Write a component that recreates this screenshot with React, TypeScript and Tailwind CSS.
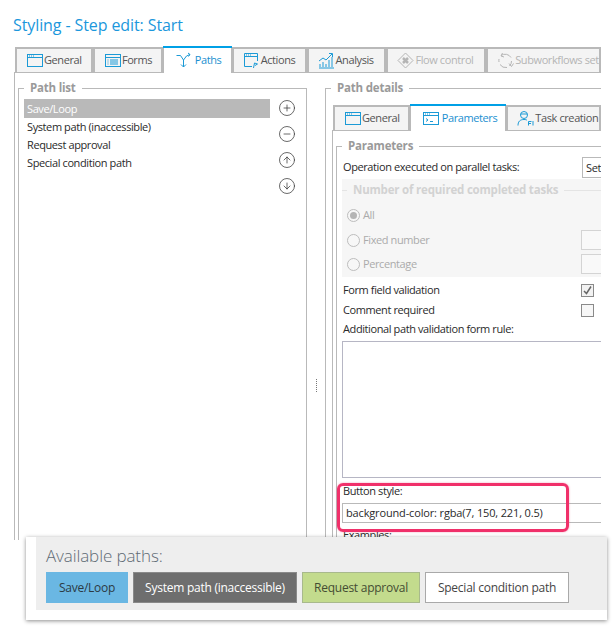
import { CircleArrowDown, CircleArrowUp, CircleMinus, CirclePlus } from "lucide-react";
import type { ReactNode } from "react";

const BLUE = "#1b9ad6";

function Ico({ children, color = BLUE, w = 17 }: { children: ReactNode; color?: string; w?: number }) {
  return (
    <svg width={w} height="17" viewBox="0 0 17 17" fill="none" stroke={color} strokeWidth="1" className="shrink-0">
      {children}
    </svg>
  );
}

const WindowIcon = () => (
  <Ico>
    <rect x="1.5" y="2.5" width="15" height="12" />
    <path d="M1.5 5.5h15" />
    <path d="M3 4h1M5 4h1M7 4h1" />
  </Ico>
);
const FormsIcon = () => (
  <Ico>
    <rect x="1.5" y="2.5" width="15" height="12" />
    <path d="M1.5 5.5h15M3.5 8h1M6 8h8M3.5 10h1M6 10h8M3.5 12h1M6 12h8" />
  </Ico>
);
const PathsIcon = () => (
  <Ico>
    <path d="M1.5 3.500h4l3 4.500v7M6 12.500l2.500 2.500 2.500-2.500M15 2.500l-3.500 1.500-3 4M13 1l2 1.500-1.500 2" />
  </Ico>
);
const ActionsIcon = () => (
  <Ico>
    <path d="M9 14.500H1.500v-13h13V9M1.500 4.500h13" />
    <path d="M3 3h1M5 3h1M7 3h1" />
    <path d="M10.500 16l1-5 3 1-2.500 1.500" />
  </Ico>
);
const AnalysisIcon = () => (
  <Ico>
    <path d="M2 15v-3M5 15v-5M8 15v-3M11 15V8M14 15V5M1 16h15" />
    <path d="M1 9l4-3 3 2 6-6M11 1.500h3.500V5" />
  </Ico>
);
const FlowIcon = () => (
  <Ico color="#b5b5b5">
    <path d="M8.500 1l7.500 7.500-7.500 7.500L1 8.500z" />
    <path d="M6 6l5 5M11 6l-5 5" strokeWidth="2.500" />
  </Ico>
);
const SubflowIcon = () => (
  <Ico color="#b5b5b5">
    <path d="M4 3.500a7 7 0 0 1 10 2M14.500 9a6.500 6.500 0 0 1-2 5M10 15.500a7 7 0 0 1-7-3M2 10a7 7 0 0 1 0-3" />
    <path d="M12 11.500l2.500 3 2-3M5.500 1l-1.500 3 3 1" />
  </Ico>
);
const ParamsIcon = () => (
  <Ico>
    <rect x="1.500" y="2.500" width="15" height="12" />
    <path d="M1.500 5.500h15M3 4h1M5 4h1M7 4h1M4 8.500l2 1.500-2 1.500M8 11.500h3" />
  </Ico>
);
const TaskIcon = () => (
  <Ico>
    <circle cx="7" cy="5" r="3.500" />
    <path d="M3.500 4h7M1 15.500c0-4 2-6 6-6 1.500 0 2.500.3 3 .8" />
    <path d="M11.500 15.500v-4h3M11.500 13.500h2.500M16 11v4.500" />
  </Ico>
);

function Tab({
  icon,
  label,
  width,
  active,
  disabled,
}: {
  icon: ReactNode;
  label: string;
  width: string;
  active?: boolean;
  disabled?: boolean;
}) {
  return (
    <div
      className={`${width} flex items-center overflow-hidden whitespace-nowrap border-[#b9b9b9] ${
        active
          ? "relative z-10 -mb-px h-[27px] gap-[3px] border-x-0 border-t-2 border-t-[#00a0e6] bg-white pb-px pl-[12px] text-[#1b8fd0] shadow-[inset_-1px_0_0_#b9b9b9,inset_1px_0_0_#b9b9b9]"
          : "mt-[2px] h-[25px] gap-[1px] border-x-2 border-t-2 border-b-0 bg-[#f4f4f4] pl-[9px]"
      } ${disabled ? "text-[#b4b4b4]" : active ? "" : "text-[#555555]"}`}
    >
      {icon}
      <span>{label}</span>
    </div>
  );
}

function Legend({ children, className = "" }: { children: ReactNode; className?: string }) {
  return (
    <div
      className={`absolute -top-[9px] left-[5px] bg-white px-[6px] text-[11.5px] leading-[16px] font-bold tracking-[-0.2px] ${className}`}
    >
      {children}
    </div>
  );
}

function Radio({ label, checked }: { label: string; checked?: boolean }) {
  return (
    <div className="flex items-center gap-[3px]">
      <span className="flex h-[13px] w-[13px] items-center justify-center rounded-full border border-[#bdbdbd] bg-[#f7f7f7]">
        {checked && <span className="h-[7px] w-[7px] rounded-full bg-[#b5b5b5]" />}
      </span>
      <span>{label}</span>
    </div>
  );
}

const paths = [
  { label: "Save/Loop", className: "w-[82px] bg-[#6ab7e3] border-[#6ab7e3] text-[#2c3a44]" },
  { label: "System path (inaccessible)", className: "w-[164px] bg-[#6e6e6e] border-[#8a8a8a] text-white" },
  { label: "Request approval", className: "w-[118px] bg-[#c3db8d] border-[#a8b98c] text-[#444d33]" },
  { label: "Special condition path", className: "w-[144px] bg-white border-[#a9a9a9] text-[#444444]" },
];

export default function App() {
  return (
    <div className="relative h-[626px] w-[612px] overflow-hidden bg-white font-['Open_Sans','Noto_Sans',sans-serif] text-[11px] tracking-[-0.4px] text-[#333333]">
      <div className="w-[601px] overflow-hidden pl-[14px]">
        <h1 className="-ml-px pt-[14px] pb-[10px] text-[16px] leading-[22px] tracking-[-0.1px] text-[#1b97dc]">
          Styling - Step edit: Start
        </h1>

        {/* top tabs */}
        <div className="relative flex h-[26px] items-end pl-px">
          <Tab icon={<WindowIcon />} label="General" width="w-[78px]" />
          <Tab icon={<FormsIcon />} label="Forms" width="w-[70px]" />
          <Tab icon={<PathsIcon />} label="Paths" width="w-[69px]" active />
          <Tab icon={<ActionsIcon />} label="Actions" width="w-[75px]" />
          <Tab icon={<AnalysisIcon />} label="Analysis" width="w-[80px]" />
          <Tab icon={<FlowIcon />} label="Flow control" width="w-[100px]" disabled />
          <Tab icon={<SubflowIcon />} label="Subworkflows settings" width="w-[115px]" disabled />
        </div>

        <div className="flex h-[468px] border-t border-l border-[#b9b9b9] pt-[15px] pl-[3px]">
          {/* path list */}
          <div className="relative flex h-[452px] w-[289px] shrink-0 border border-b-0 border-[#b9b9b9] pt-[10px] pl-[5px]">
            <Legend className="text-[#9a9a9a]">Path list</Legend>
            <div className="w-[246px] text-[#2a2a2a]">
              <div className="flex h-[19px] items-center bg-[#b9b9b9] pt-px pl-[3px] text-white">Save/Loop</div>
              <div className="flex h-[18px] items-center pl-[3px]">System path (inaccessible)</div>
              <div className="flex h-[18px] items-center pl-[3px]">Request approval</div>
              <div className="flex h-[18px] items-center pl-[3px]">Special condition path</div>
            </div>
            <div className="ml-[8px] flex flex-col gap-[8px] text-[#3a3a3a]">
              <CirclePlus size={18} strokeWidth={1} />
              <CircleMinus size={18} strokeWidth={1} />
              <CircleArrowUp size={18} strokeWidth={1} />
              <CircleArrowDown size={18} strokeWidth={1} />
            </div>
          </div>

          {/* splitter */}
          <div className="flex w-[18px] shrink-0 flex-col items-center gap-px pt-[291px]">
            <span className="h-px w-px bg-[#777777]" />
            <span className="h-px w-px bg-[#777777]" />
            <span className="h-px w-px bg-[#777777]" />
            <span className="h-px w-px bg-[#777777]" />
            <span className="h-px w-px bg-[#777777]" />
            <span className="h-px w-px bg-[#777777]" />
            <span className="h-px w-px bg-[#777777]" />
          </div>

          {/* path details */}
          <div className="relative h-[452px] min-w-0 flex-1 border-t border-l border-[#b9b9b9] pt-[16px] pl-[6px]">
            <Legend className="text-[#9a9a9a]">Path details</Legend>
            <div className="flex h-[25px] items-end pl-px">
              <Tab icon={<WindowIcon />} label="General" width="w-[77px]" />
              <Tab icon={<ParamsIcon />} label="Parameters" width="w-[97px]" active />
              <Tab icon={<TaskIcon />} label="Task creation" width="w-[95px]" />
            </div>
            <div className="h-[411px] border-t border-l border-[#b9b9b9] pt-[15px] pl-[3px]">
              <div className="relative h-[395px] border-t border-l border-[#b9b9b9] pt-[10px] pl-[6px]">
                <Legend className="text-[#9a9a9a]">Parameters</Legend>
                <div className="flex h-[21px] items-center justify-between text-[#2a2a2a]">
                  <span>Operation executed on parallel tasks:</span>
                  <div className="w-[19px] border border-r-0 border-[#b9b9b9] pl-[3px] leading-[19px] whitespace-nowrap">
                    Set
                  </div>
                </div>

                <div className="relative mt-[1px] -ml-[1px] h-[98px] bg-[#f6f6f6] pt-[12px] text-[#ababab]">
                  <div className="absolute top-[11px] left-0 h-px w-full bg-[#e4e4e4]" />
                  <div className="absolute top-[3px] left-[5px] bg-[#f6f6f6] px-[6px] text-[11.5px] leading-[16px] font-bold tracking-[-0.2px] text-[#d2d2d2]">
                    Number of required completed tasks
                  </div>
                  <div className="flex flex-col pt-[12px] pl-[5px]">
                    <div className="flex h-[25px] items-center">
                      <Radio label="All" checked />
                    </div>
                    <div className="flex h-[24px] items-center justify-between">
                      <Radio label="Fixed number" />
                      <div className="h-[20px] w-[20px] border border-r-0 border-[#d4d4d4] bg-[#f9f9f9]" />
                    </div>
                    <div className="flex h-[24px] items-center justify-between">
                      <Radio label="Percentage" />
                      <div className="h-[20px] w-[20px] border border-r-0 border-[#d4d4d4] bg-[#f9f9f9]" />
                    </div>
                  </div>
                </div>

                <div className="text-[#2a2a2a]">
                  <div className="mt-[3px] flex h-[20px] items-center justify-between pr-[7px]">
                    <span>Form field validation</span>
                    <span className="flex h-[13px] w-[13px] items-center justify-center border border-[#8a8a8a] bg-[#f2f2f2]">
                      <svg width="11" height="11" viewBox="0 0 11 11" fill="none" stroke="#666666" strokeWidth="1.500">
                        <path d="M2 6l2.500 2.500L9 1.500" />
                      </svg>
                    </span>
                  </div>
                  <div className="flex h-[20px] items-center justify-between pr-[7px]">
                    <span>Comment required</span>
                    <span className="h-[13px] w-[13px] border border-[#8a8a8a] bg-[#f7f7f7]" />
                  </div>
                  <div className="flex h-[19px] items-center">Additional path validation form rule:</div>
                  <div className="-ml-px mt-[2px] h-[137px] border border-r-0 border-[#b6b6c4]" />
                  <div className="mt-[5px] leading-[16px]">Button style:</div>
                  <div className="-ml-px mt-[4px] flex h-[20px] items-center border border-r-0 border-[#b9b9b9] pl-[3px] tracking-[-0.15px]">
                    background-color: rgba(7, 150, 221, 0.5)
                  </div>
                  <div className="mt-[4px] leading-[16px]">Examples:</div>
                </div>
              </div>
            </div>
          </div>
        </div>
      </div>

      {/* highlight around the style field */}
      <div className="absolute top-[483px] left-[337px] h-[49px] w-[232px] rounded-[6px] border-[3px] border-[#f0306a] shadow-[0_0_2px_rgba(240,48,106,0.5)]" />

      {/* pasted preview of the paths */}
      <div className="absolute top-[537px] left-[26px] h-[83px] w-[581px] bg-white pl-[10px] shadow-[0_1px_4px_rgba(0,0,0,0.45)]">
        <div className="h-[73px] bg-[#eeeeee] pt-[7px] pl-[10px]">
          <div className="text-[17px] leading-[24px] font-light tracking-[-0.1px] text-[#5f6b75]">Available paths:</div>
          <div className="mt-[4px] flex gap-[5px] text-[12px] tracking-[-0.25px]">
            {paths.map((path) => (
              <div key={path.label} className={`${path.className} flex h-[31px] items-center justify-center border`}>
                {path.label}
              </div>
            ))}
          </div>
        </div>
      </div>
    </div>
  );
}
